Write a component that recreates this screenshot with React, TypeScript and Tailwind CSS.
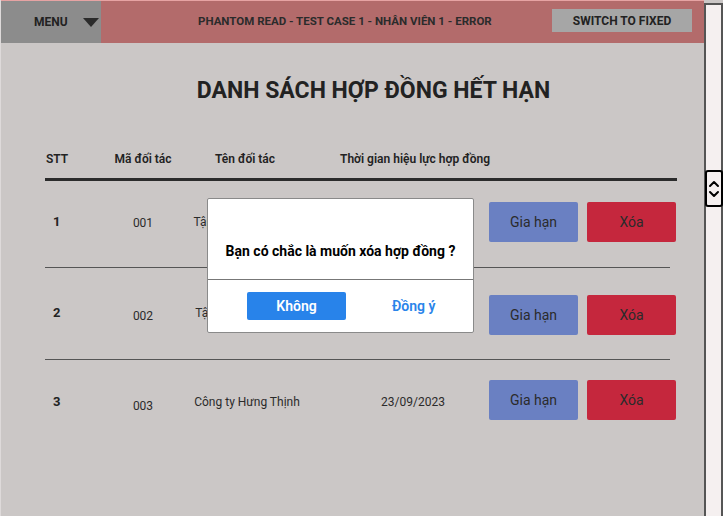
const rows = [
  { stt: "1", code: "001", name: "Tập đoàn Minh Phát", date: "15/08/2023", h: "h-[87px]", pt: "pt-[21px]", tx: "" },
  { stt: "2", code: "002", name: "Tập đoàn Minh Anh", date: "02/09/2023", h: "h-[92px]", pt: "pt-[27px]", tx: "pb-[5px]" },
  { stt: "3", code: "003", name: "Công ty Hưng Thịnh", date: "23/09/2023", h: "h-[80px]", pt: "pt-[20px]", tx: "pt-[4px]" },
];

function ScrollThumb() {
  return (
    <div className="ml-[-1px] mt-[165px] flex h-[37px] w-[18px] items-center justify-center rounded-[3px] border-2 border-black bg-[#f5f0f0]">
      <svg width="12" height="24" viewBox="0 0 12 24" fill="none" stroke="black" strokeWidth="2" strokeLinecap="round" strokeLinejoin="round">
        <path d="M2 9l4-4 4 4" />
        <path d="M2 15l4 4 4-4" />
      </svg>
    </div>
  );
}

export default function App() {
  return (
    <div className="flex h-[516px] w-[723px] overflow-hidden bg-[#cbc7c6] font-['Roboto',sans-serif] text-[#2b2b2b]">
      <div className="relative flex min-w-0 flex-1 flex-col border-l border-[#dedada]">
        {/* top bar */}
        <div className="flex h-[43px] items-stretch border-t border-[#e6a3a3] bg-[#b36b6b]">
          <div className="flex w-[100px] items-center bg-[#8c8c8c] pl-[33px] text-[12px] font-bold text-[#222]">
            MENU
            <svg className="ml-[15px]" width="16" height="9" viewBox="0 0 16 9">
              <path d="M0 0h16L8 9z" fill="#2b2b2b" />
            </svg>
          </div>
          <div className="flex flex-1 items-center whitespace-nowrap pl-[97px] text-[11.5px] font-bold text-[#2b2b2b]">
            PHANTOM READ - TEST CASE 1 - NHÂN VIÊN 1 - ERROR
          </div>
          <div className="mr-[12px] mt-[8px] flex h-[23px] w-[140px] items-center justify-center bg-[#a6a6a6] text-[12px] font-bold text-[#222]">
            SWITCH TO FIXED
          </div>
        </div>

        <h1 className="mt-[34px] pl-[42px] text-center text-[23px] font-bold leading-[28px] text-[#222]">
          DANH SÁCH HỢP ĐỒNG HẾT HẠN
        </h1>

        {/* table */}
        <div className="ml-[44px] mt-[45px] w-[632px]">
          <div className="flex h-[31px] items-start whitespace-nowrap border-b-[3px] border-[#2b2b2b] text-[12px] font-semibold text-[#222]">
            <div className="w-[60px] shrink-0 pl-[1px]">STT</div>
            <div className="w-[76px] shrink-0 text-center">Mã đối tác</div>
            <div className="w-[128px] shrink-0 text-center">Tên đối tác</div>
            <div className="ml-[31px] w-[146px] shrink-0 text-center">Thời gian hiệu lực hợp đồng</div>
          </div>
          {rows.map((r, i) => (
            <div key={r.stt} className={`${r.h} ${r.pt} ${i < rows.length - 1 ? "w-[625px] border-b border-[#555]" : ""}`}>
              <div className="flex h-[40px] items-center whitespace-nowrap">
                <div className={`w-[60px] shrink-0 pl-[8px] text-[13px] font-bold text-[#222] ${r.tx}`}>{r.stt}</div>
                <div className={`w-[76px] shrink-0 text-center text-[12px] ${i === 2 ? "pt-[11px]" : "pt-[2px]"}`}>{r.code}</div>
                <div className={`w-[128px] shrink-0 pl-[4px] text-center text-[12px] ${r.tx}`}>{r.name}</div>
                <div className={`ml-[31px] w-[146px] shrink-0 text-center text-[12px] ${r.tx}`}>{r.date}</div>
                <button className="ml-[3px] h-[40px] w-[89px] shrink-0 rounded-[2px] bg-[#6a80c2] text-[14px] text-[#2b2b2b]">Gia hạn</button>
                <button className="ml-[9px] h-[40px] w-[89px] shrink-0 rounded-[2px] bg-[#c5273d] text-[14px] text-[#2b2b2b]">Xóa</button>
              </div>
            </div>
          ))}
        </div>

        {/* confirm dialog */}
        <div className="absolute left-[206px] top-[198px] flex h-[135px] w-[267px] flex-col rounded-[2px] border border-[#8a8a8a] bg-white">
          <div className="flex h-[81px] items-center justify-center border-b border-[#777] pt-[24px] text-[14px] font-bold text-black">
            Bạn có chắc là muốn xóa hợp đồng ?
          </div>
          <div className="flex flex-1 items-center pl-[39px]">
            <button className="h-[28px] w-[99px] rounded-[2px] bg-[#2883ea] text-[14px] font-semibold text-white">Không</button>
            <button className="ml-[46px] text-[14px] font-semibold text-[#2a84ea]">Đồng ý</button>
          </div>
        </div>
      </div>

      {/* right scroll strip */}
      <div className="mt-[3px] flex w-[19px] flex-col border-x-2 border-t-2 border-[#555] bg-[#f5f0f0]">
        <ScrollThumb />
      </div>
    </div>
  );
}
